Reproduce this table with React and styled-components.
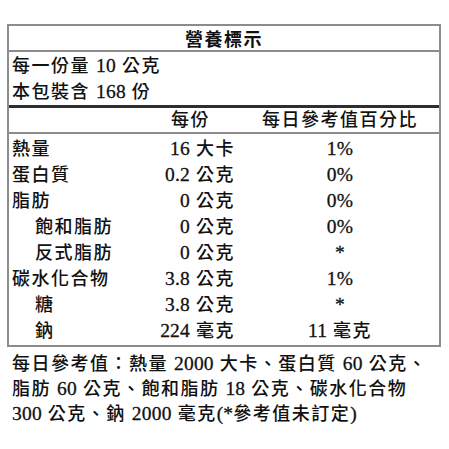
import React from "react";
import styled, { createGlobalStyle } from "styled-components";

const GlobalStyle = createGlobalStyle`
  html, body {
    margin: 0;
    padding: 0;
    background: #ffffff;
  }
  body {
    font-family: "Liberation Serif", "Noto Sans CJK TC", serif;
    color: #111111;
  }
`;

const Page = styled.div`
  width: 449px;
  height: 449px;
  box-sizing: border-box;
  padding: 24px 0 0 7px;
  font-size: 18px;
  font-weight: 500;
  letter-spacing: 1.5px;
`;

const Label = styled.div`
  width: 434px;
  box-sizing: border-box;
  border: 2px solid #8c8c8c;
`;

const Title = styled.div`
  height: 26px;
  box-sizing: border-box;
  padding-top: 2px;
  line-height: 24px;
  text-align: center;
  font-weight: 700;
  border-bottom: 2px solid #8c8c8c;
`;

const Serving = styled.div`
  padding: 1px 0 0 3px;
  border-bottom: 3px solid #2e2e2e;
`;

const Line = styled.div`
  height: ${(p) => p.$h || 26}px;
  line-height: ${(p) => p.$h || 26}px;
  white-space: nowrap;
`;

const Num = styled.span`
  font-size: 19.5px;
  letter-spacing: 0.2px;
  font-weight: 400;
  -webkit-text-stroke: 0.3px #111111;
`;

const Grid = styled.div`
  display: grid;
  grid-template-columns: 141px 89px 1fr;
  align-items: center;
  height: 26px;
  line-height: 26px;
  white-space: nowrap;
`;

const HeaderRow = styled(Grid)`
  height: 24px;
  line-height: 24px;
  border-bottom: 2px solid #8c8c8c;
`;

const Rows = styled.div`
  padding: 2px 0 1px;
`;

const Name = styled.div`
  padding-left: ${(p) => (p.$sub ? 26 : 3)}px;
`;

const Value = styled.div`
  text-align: right;
  padding-right: 4px;
`;

const HeadValue = styled.div`
  text-align: center;
  padding-right: 8px;
`;

const Pct = styled.div`
  text-align: center;
  padding-left: 2px;
`;

const Footnote = styled.div`
  margin-top: 4px;
  padding-left: 5px;
`;

function T({ children }) {
  const parts = String(children).split(/([0-9.%*()]+)/);
  return (
    <>
      {parts.map((p, i) =>
        /^[0-9.%*()]+$/.test(p) ? <Num key={i}>{p}</Num> : <React.Fragment key={i}>{p}</React.Fragment>
      )}
    </>
  );
}

const rows = [
  { name: "熱量", value: "16 大卡", pct: "1%" },
  { name: "蛋白質", value: "0.2 公克", pct: "0%" },
  { name: "脂肪", value: "0 公克", pct: "0%" },
  { name: "飽和脂肪", value: "0 公克", pct: "0%", sub: true },
  { name: "反式脂肪", value: "0 公克", pct: "*", sub: true },
  { name: "碳水化合物", value: "3.8 公克", pct: "1%" },
  { name: "糖", value: "3.8 公克", pct: "*", sub: true },
  { name: "鈉", value: "224 毫克", pct: "11 毫克", sub: true },
];

export default function App() {
  return (
    <>
      <GlobalStyle />
      <Page>
        <Label>
          <Title>營養標示</Title>
          <Serving>
            <Line><T>每一份量 10 公克</T></Line>
            <Line><T>本包裝含 168 份</T></Line>
          </Serving>
          <HeaderRow>
            <Name />
            <HeadValue>每份</HeadValue>
            <Pct>每日參考值百分比</Pct>
          </HeaderRow>
          <Rows>
            {rows.map((r) => (
              <Grid key={r.name}>
                <Name $sub={r.sub}>{r.name}</Name>
                <Value><T>{r.value}</T></Value>
                <Pct><T>{r.pct}</T></Pct>
              </Grid>
            ))}
          </Rows>
        </Label>
        <Footnote>
          <Line $h={25}><T>每日參考值：熱量 2000 大卡、蛋白質 60 公克、</T></Line>
          <Line $h={25}><T>脂肪 60 公克、飽和脂肪 18 公克、碳水化合物</T></Line>
          <Line $h={25}><T>300 公克、鈉 2000 毫克(*參考值未訂定)</T></Line>
        </Footnote>
      </Page>
    </>
  );
}
